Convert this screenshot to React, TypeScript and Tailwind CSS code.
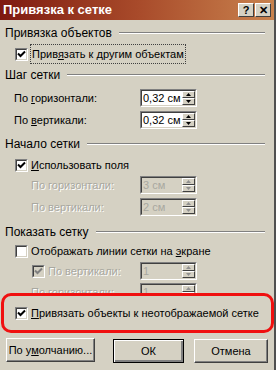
import React from 'react'

const font = { fontFamily: '"Liberation Sans", Arial, sans-serif' }

const Check = ({ checked, disabled }: { checked?: boolean; disabled?: boolean }) => (
  <span className="block w-[13px] h-[13px] shrink-0 border border-t-[#808080] border-l-[#808080] border-b-white border-r-white">
    <span
      className={`flex items-center justify-center w-full h-full border border-t-[#404040] border-l-[#404040] border-b-[#d5d1c3] border-r-[#d5d1c3] ${
        disabled ? 'bg-[#d5d1c3]' : 'bg-white'
      }`}
    >
      {checked && (
        <svg width="9" height="9" viewBox="0 0 9 9">
          <path
            d="M1 3.5 L3.5 6 L8 1.5"
            fill="none"
            stroke={disabled ? '#808080' : '#000'}
            strokeWidth="2"
          />
        </svg>
      )}
    </span>
  </span>
)

const Arrow = ({ up, disabled }: { up?: boolean; disabled?: boolean }) => (
  <span className="flex-1 flex items-center justify-center bg-[#d5d1c3] border border-t-white border-l-white border-b-[#404040] border-r-[#404040]">
    <svg width="5" height="3" viewBox="0 0 5 3">
      <path d={up ? 'M0 3 L2.5 0 L5 3 Z' : 'M0 0 L5 0 L2.5 3 Z'} fill={disabled ? '#909090' : '#000'} />
    </svg>
  </span>
)

const Spin = ({ value, disabled }: { value: string; disabled?: boolean }) => (
  <div className="w-[57px] h-[18px] shrink-0 flex border border-t-[#808080] border-l-[#808080] border-b-white border-r-white">
    <div
      className={`flex-1 flex border border-t-[#404040] border-l-[#404040] border-b-[#d5d1c3] border-r-[#d5d1c3] ${
        disabled ? 'bg-[#d5d1c3] text-[#a8a8a0]' : 'bg-white text-black'
      }`}
    >
      <span className="flex-1 pl-[1px] text-[11px] leading-[14px] whitespace-nowrap overflow-hidden">{value}</span>
      <div className="w-[13px] flex flex-col">
        <Arrow up disabled={disabled} />
        <Arrow disabled={disabled} />
      </div>
    </div>
  </div>
)

const Heading = ({ title }: { title: string }) => (
  <div className="h-[14px] flex items-center gap-[7px] pl-[5px] pr-[9px] text-[12px] whitespace-nowrap">
    <span>{title}</span>
    <span className="flex-1 h-[2px] border-t border-t-[#808080] border-b border-b-white" />
  </div>
)

const Row = ({ label, value, disabled, mt }: { label: React.ReactNode; value: string; disabled?: boolean; mt: string }) => (
  <div className={`h-[20px] flex items-center ${mt}`}>
    <span
      className={`w-[140px] shrink-0 text-[11px] whitespace-nowrap ${
        disabled ? 'pl-[31px] text-[#a8a8a0] [text-shadow:1px_1px_0_#fff]' : 'pl-[14px]'
      }`}
    >
      {label}
    </span>
    <Spin value={value} disabled={disabled} />
  </div>
)

const Btn = ({ children, w, def }: { children: React.ReactNode; w: string; def?: boolean }) => (
  <button
    className={`${w} h-[24px] text-[11px] whitespace-nowrap bg-[#d5d1c3] border ${
      def ? 'border-black shadow-[inset_1px_1px_#fff,inset_-2px_-2px_#808080]' : 'border-t-white border-l-white border-b-[#404040] border-r-[#404040] shadow-[inset_-1px_-1px_#808080]'
    }`}
  >
    {children}
  </button>
)

export default function App() {
  return (
    <div
      className="w-[276px] h-[370px] overflow-hidden bg-[#d5d1c3] text-black border-r-2 border-r-[#505050] flex flex-col"
      style={font}
    >
      <div className="h-[20px] shrink-0 flex items-center pl-[3px] pr-[3px] bg-gradient-to-r from-[#7e1810] via-[#a84a2a] to-[#c8824e]">
        <span className="flex-1 text-white font-bold text-[13px]">Привязка к сетке</span>
        <span className="w-[16px] h-[14px] flex items-center justify-center bg-[#d5d1c3] border border-t-white border-l-white border-b-[#404040] border-r-[#404040] text-[11px] font-bold leading-none">
          ?
        </span>
        <span className="ml-[1px] w-[16px] h-[14px] flex items-center justify-center bg-[#d5d1c3] border border-t-white border-l-white border-b-[#404040] border-r-[#404040] text-[11px] font-bold leading-none">
          ✕
        </span>
      </div>

      <div className="mt-[6px]">
        <Heading title="Привязка объектов" />
      </div>
      <div className="mt-[4px] h-[20px] flex items-center pl-[15px] gap-[2px] text-[11px] whitespace-nowrap">
        <Check checked />
        <span className="px-[1px] py-[1px] border border-dotted border-[#404040]">
          Прив<u>я</u>зать к другим объектам
        </span>
      </div>

      <div className="mt-[4px]">
        <Heading title="Шаг сетки" />
      </div>
      <Row mt="mt-[6px]" label={<>По <u>г</u>оризонтали:</>} value="0,32 см" />
      <Row mt="mt-[2px]" label={<>По <u>в</u>ертикали:</>} value="0,32 см" />

      <div className="mt-[7px]">
        <Heading title="Начало сетки" />
      </div>
      <div className="mt-[4px] h-[20px] flex items-center pl-[15px] gap-[3px] text-[11px] whitespace-nowrap">
        <Check checked />
        <span>
          <u>И</u>спользовать поля
        </span>
      </div>
      <Row mt="mt-0" label="По горизонтали:" value="3 см" disabled />
      <Row mt="mt-[2px]" label="По вертикали:" value="2 см" disabled />

      <div className="mt-[8px]">
        <Heading title="Показать сетку" />
      </div>
      <div className="mt-[2px] h-[20px] flex items-center pl-[15px] gap-[3px] text-[11px] whitespace-nowrap">
        <Check />
        <span>
          Отображать линии сетки на <u>э</u>кране
        </span>
      </div>
      <div className="h-[20px] flex items-center">
        <div className="w-[140px] shrink-0 flex items-center pl-[32px] gap-[3px] text-[11px] whitespace-nowrap text-[#a8a8a0] [text-shadow:1px_1px_0_#fff]">
          <Check checked disabled />
          <span>По вертикали:</span>
        </div>
        <Spin value="1" disabled />
      </div>
      <Row mt="mt-[1px]" label="По горизонтали:" value="1" disabled />

      <div className="relative z-10 -mt-[9px] ml-[1px] w-[273px] h-[40px] shrink-0 bg-[#d5d1c3] border-[3px] border-[#f01010] rounded-[10px] flex items-center pl-[11px] gap-[3px] text-[11px] whitespace-nowrap">
        <Check checked />
        <span>
          <u>П</u>ривязать объекты к неотображаемой сетке
        </span>
      </div>

      <div className="mt-[5px] flex pl-[6px]">
        <Btn w="w-[89px]">
          По у<u>м</u>олчанию...
        </Btn>
        <span className="ml-[18px]">
          <Btn w="w-[71px]" def>
            ОК
          </Btn>
        </span>
        <span className="ml-[10px]">
          <Btn w="w-[74px]">Отмена</Btn>
        </span>
      </div>
    </div>
  )
}
